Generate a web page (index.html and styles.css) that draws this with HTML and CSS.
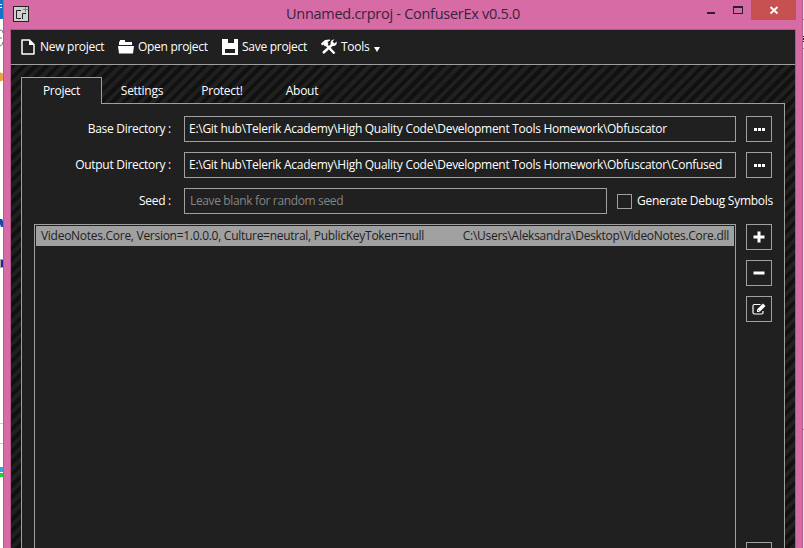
FILE: index.html
```html
<!DOCTYPE html>
<html lang="en">
<head>
<meta charset="utf-8">
<title>Unnamed.crproj - ConfuserEx v0.5.0</title>
<link rel="stylesheet" href="styles.css">
</head>
<body>
<div class="desktop">
  <svg class="edge" width="3" height="548" viewBox="0 0 3 548">
    <rect width="4" height="19" fill="#1473c8"/><path d="M0 4.500h2M0 7.500h2" stroke="#fff"/>
    <path d="M0 30q3 0 3 3M0 38h2M0 46q3-1 3-4" fill="none" stroke="#777"/>
    <circle cx="0" cy="77" r="4.500" fill="#e8a33c"/>
    <path d="M0 219h2l1 2v6H1l-1-3z" fill="#1746ad"/>
    <path d="M0 259h3v9H0z" fill="#aaa"/><path d="M2 260v7" stroke="#2222a0" stroke-width="2"/>
    <path d="M0 423.500h3M0 443.500h3" stroke="#ccc"/>
    <path d="M0 467h3v5H0z" fill="#3aa0d8"/><path d="M0 473h3v4H0z" fill="#20d030"/>
  </svg>
  <main class="window">
    <header class="titlebar">
      <svg class="app" width="16" height="16" viewBox="0 0 16 16"><rect x=".5" y=".5" width="15" height="15" fill="#cfcfcf" stroke="#222"/><path d="M8 4.500H3.500v8H8M9.500 13V7.500H13" fill="none" stroke="#222"/><path d="M12.500 1v5M10 3.500h5" stroke="#16a9e0"/></svg>
      <h1><span class="t-title">Unnamed.crproj - ConfuserEx v0.5.0</span></h1>
      <svg class="controls" width="89" height="20" viewBox="0 0 89 20"><rect x="44" width="45" height="20" fill="#c75050"/><path d="M0 12h8v2H0z" fill="#2b2029"/><path d="M26 6h10v8H26zM27 8v5h8V8z" fill="#2b2029" fill-rule="evenodd"/><path d="M63.500 7l7 6.500M70.500 7l-7 6.500" stroke="#fff" stroke-width="1.800"/></svg>
    </header>
    <section class="client">
      <nav class="menu">
        <svg class="m-new" width="14" height="16" viewBox="0 0 14 16"><path d="M1 1h7.500L13 5.500V15H1z" fill="none" stroke="#fff" stroke-width="1.500" stroke-linejoin="round"/><path d="M8 1l5 5H8z" fill="#fff"/></svg>
        <span class="t-new">New project</span>
        <svg class="m-open" width="16" height="14" viewBox="0 0 16 14"><path d="M1 5V2l1-1V0h5v2h7v3zM0 6h16l-1 7.500H1z" fill="#fff"/></svg>
        <span class="t-open">Open project</span>
        <svg class="m-save" width="16" height="16" viewBox="0 0 16 16"><path d="M0 0h3v6h10V0h3v16H0zM3 10v4h10v-4z" fill="#fff" fill-rule="evenodd"/><path d="M4 0h2v4h6V0h1v6H3V0z" fill="#fff"/></svg>
        <span class="t-save">Save project</span>
        <svg class="m-tools" width="16" height="16" viewBox="0 0 16 16"><path d="M13.500 14.500L4 4.500M2 14L12.500 4.500" stroke="#fff" stroke-width="2.500" fill="none"/><path d="M0 4.500L4 1l5-.500v1L6.500 3l1 2L4 7.500 2.500 5.500 1 6.500z" fill="#fff"/><path d="M15.500 2.500q1 4-3 4.500l-2-.500-1-2q0-4 4-4l-2 2 2 2z" fill="#fff"/></svg>
        <span class="t-tools">Tools</span>
        <svg class="m-arrow" width="6" height="5" viewBox="0 0 6 5"><path d="M0 0h6L3 5z" fill="#fff"/></svg>
      </nav>
      <div class="body">
        <div class="tabs">
          <div class="tab active"><span>Project</span></div>
          <div class="tab"><span>Settings</span></div>
          <div class="tab"><span>Protect!</span></div>
          <div class="tab"><span>About</span></div>
        </div>
        <div class="panel">
          <div class="row"><label>Base Directory :</label><div class="field"><span>E:\Git hub\Telerik Academy\High Quality Code\Development Tools Homework\Obfuscator</span></div><button><i class="dots"></i></button></div>
          <div class="row"><label>Output Directory :</label><div class="field"><span>E:\Git hub\Telerik Academy\High Quality Code\Development Tools Homework\Obfuscator\Confused</span></div><button><i class="dots"></i></button></div>
          <div class="row"><label>Seed :</label><div class="field seed"><span>Leave blank for random seed</span></div><i class="check"></i><span class="t-debug">Generate Debug Symbols</span></div>
          <div class="modules">
            <div class="list"><div class="item"><span>VideoNotes.Core, Version=1.0.0.0, Culture=neutral, PublicKeyToken=null</span><span>C:\Users\Aleksandra\Desktop\VideoNotes.Core.dll</span></div></div>
            <div class="side">
              <button><svg width="12" height="12" viewBox="0 0 12 12"><path d="M6 .500v11M.500 6h11" stroke="#fff" stroke-width="3"/></svg></button>
              <button><svg width="12" height="12" viewBox="0 0 12 12"><path d="M.500 6h11" stroke="#fff" stroke-width="3"/></svg></button>
              <button><svg width="14" height="12" viewBox="0 0 14 12"><path d="M8.500 1.500H2.500Q1 1.500 1 3v6.500Q1 11 2.500 11h7q1.500 0 1.500-1.500V8" fill="none" stroke="#fff" stroke-width="1.200"/><path d="M5 9V6.500L11 .500l2.500 2.500-6 6z" fill="#fff"/><path d="M6 7l1.500 1.500" stroke="#202020" stroke-width=".700"/></svg></button>
              <button class="last"></button>
            </div>
          </div>
        </div>
      </div>
    </section>
  </main>
  <svg class="edge-right" width="1" height="548" viewBox="0 0 1 548"><rect width="1" height="548" fill="#e9e6ec"/><path d="M0 36h1v1H0zM0 38h1v2H0zM0 41h1v1H0z" fill="#222"/><path d="M0 19h1v1H0zM0 48h1v1H0zM0 429h1v1H0z" fill="#999"/></svg>
</div>
</body>
</html>
```
FILE: styles.css
```css
* { box-sizing: border-box; }
body { margin: 0; width: 804px; height: 548px; overflow: hidden; font: 12px/16px "Open Sans", "Noto Sans", sans-serif; letter-spacing: -.28px; color: #fff; background: #fff; }
.desktop { display: flex; height: 548px; overflow: hidden; }
.edge, .edge-right { flex: none; }
.window { width: 800px; height: 548px; flex: none; background: #d76ba5; border: solid #b95a8e; border-width: 0 1px; padding: 0 6px; }
.titlebar { height: 29px; display: flex; align-items: flex-start; }
.app { flex: none; margin: 6px 0 0 3px; }
h1 { flex: none; margin: 3px 0 0 257px; font-size: 14.5px; line-height: 22px; font-weight: 400; color: #38233b; width: 235px; }
.controls { margin-left: 186px; flex: none; }
span { white-space: nowrap; }
.client { height: 519px; background: #202020; border: solid #b1568a; border-width: 1px 1px 0; overflow: hidden; width: 786px; }
.menu { height: 35px; border-bottom: 1px solid #a0a0a0; display: flex; align-items: center; }
.menu svg, .menu span { flex: none; }
.m-new { margin-left: 10px; }
.t-new { width: 64px; margin-left: 5px; }
.m-open { margin-left: 14px; }
.t-open { width: 71px; margin-left: 4px; }
.m-save { margin-left: 13px; }
.t-save { width: 66px; margin-left: 4px; }
.m-tools { margin-left: 13px; }
.t-tools { width: 29px; margin-left: 4px; }
.m-arrow { margin: 4px 0 0 4px; }
.body { height: 484px; padding: 12px 10px 0; background: repeating-linear-gradient(135deg, #111 0 4px, #202020 4px 8px); }
.tabs { display: flex; height: 27px; }
.tab { width: 80px; height: 26px; line-height: 27px; text-align: center; }
.tab.active { width: 81px; height: 27px; background: #202020; border: 1px solid #a0a0a0; border-bottom: 0; line-height: 26px; position: relative; }
.panel { margin-top: -1px; height: 470px; background: #202020; border: 1px solid #a0a0a0; padding: 12px; }
.row { height: 26px; margin-bottom: 10px; display: flex; align-items: center; }
label { width: 137px; text-align: right; margin-right: 13px; flex: none; }
.field { width: 552px; height: 26px; border: 1px solid #a0a0a0; padding-left: 4px; line-height: 24px; flex: none; }
.seed { width: 423px; color: #858585; padding-left: 5px; letter-spacing: -.36px; }
button { width: 26px; height: 26px; margin: 0 0 0 10px; padding: 0; border: 1px solid #a0a0a0; background: none; display: flex; align-items: center; justify-content: center; flex: none; }
.dots { width: 11px; height: 3px; background: repeating-linear-gradient(90deg, #fff 0 3px, transparent 3px 4px); }
.check { width: 15px; height: 15px; border: 1px solid #a0a0a0; margin: 0 5px 0 10px; flex: none; }
.t-debug { padding-bottom: 1px; }
.modules { display: flex; }
.list { width: 702px; height: 340px; border: 1px solid #a0a0a0; padding: 1px; }
.item { height: 20px; background: #a0a0a0; color: #202020; display: flex; justify-content: space-between; align-items: center; padding: 0 5px; }
.side { display: flex; flex-direction: column; gap: 10px; }
.last { margin-top: 210px; }
```
